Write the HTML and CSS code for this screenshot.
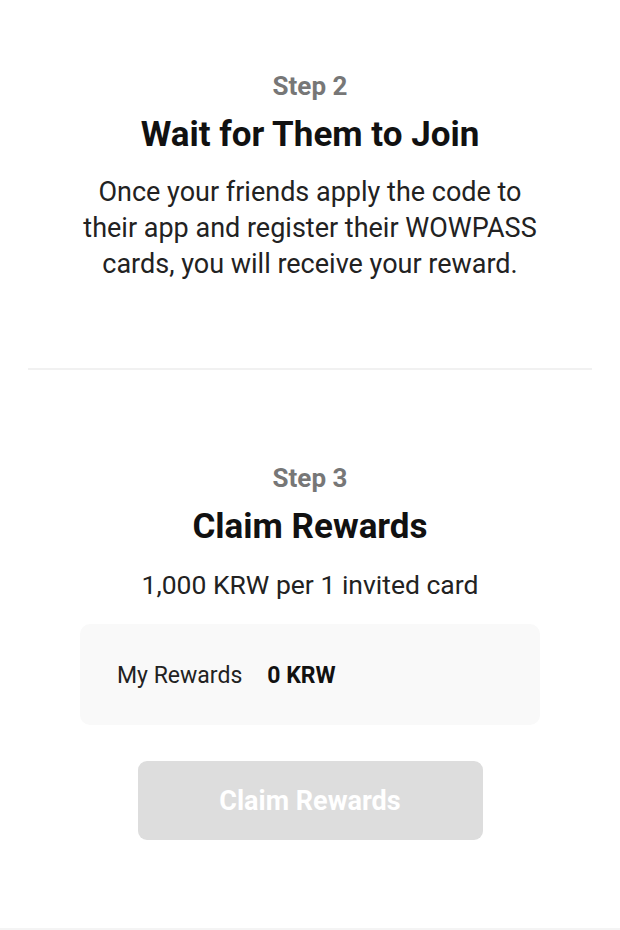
FILE: index.html
```html
<!DOCTYPE html>
<html lang="en">
<head>
    <meta charset="UTF-8">
    <title>Invite Friends</title>
    <link rel="stylesheet" href="styles.css">
</head>
<body>
<div id="page">
    <div class="step step2">
        <p class="step-no">Step 2</p>
        <h2 class="step-title">Wait for Them to Join</h2>
        <p class="step-desc">Once your friends apply the code to<br>their app and register their WOWPASS<br>cards, you will receive your reward.</p>
    </div>
    <div class="divider"></div>
    <div class="step step3">
        <p class="step-no">Step 3</p>
        <h2 class="step-title">Claim Rewards</h2>
        <p class="step-desc">1,000 KRW per 1 invited card</p>
        <div class="reward-box">
            <span class="reward-label">My Rewards</span>
            <span class="reward-value">0 KRW</span>
        </div>
        <button class="claim-btn" disabled>Claim Rewards</button>
    </div>
</div>
</body>
</html>
```

FILE: styles.css
```css
*{
    margin: 0;
    padding: 0;
    box-sizing: border-box;
}
html, body{
    height: 100%;
}
body{
    background-color: #fff;
    font-family: Roboto, "Liberation Sans", sans-serif;
}
#page{
    height: 930px;
    border-bottom: 2px solid #f4f4f4;
}
.step{
    display: flex;
    flex-direction: column;
    align-items: center;
    text-align: center;
}
.step2{
    padding-top: 71px;
}
.step-no{
    font-size: 26px;
    line-height: 30px;
    font-weight: 700;
    color: #777;
}
.step-title{
    margin-top: 14px;
    font-size: 35px;
    line-height: 40px;
    font-weight: 700;
    color: #111;
}
.step-desc{
    margin-top: 19px;
    font-size: 27px;
    line-height: 36px;
    color: #222;
}
.divider{
    margin: 86px 28px 0;
    height: 2px;
    background-color: #f1f1f1;
}
.step3{
    padding-top: 93px;
}
.step3 .step-title{
    margin-top: 14px;
}
.step3 .step-desc{
    margin-top: 20px;
    font-size: 26.5px;
}
.reward-box{
    margin-top: 21px;
    width: 460px;
    height: 101px;
    padding: 2px 37px 0;
    display: flex;
    align-items: center;
    background-color: #f9f9f9;
    border-radius: 10px;
    font-size: 23px;
    color: #222;
}
.reward-value{
    margin-left: 25px;
    font-weight: 700;
    color: #111;
}
.claim-btn{
    margin-top: 36px;
    width: 345px;
    height: 79px;
    border: none;
    border-radius: 9px;
    background-color: #dddddd;
    color: #fff;
    font-family: Roboto, "Liberation Sans", sans-serif;
    font-size: 27px;
    font-weight: 700;
}
```
